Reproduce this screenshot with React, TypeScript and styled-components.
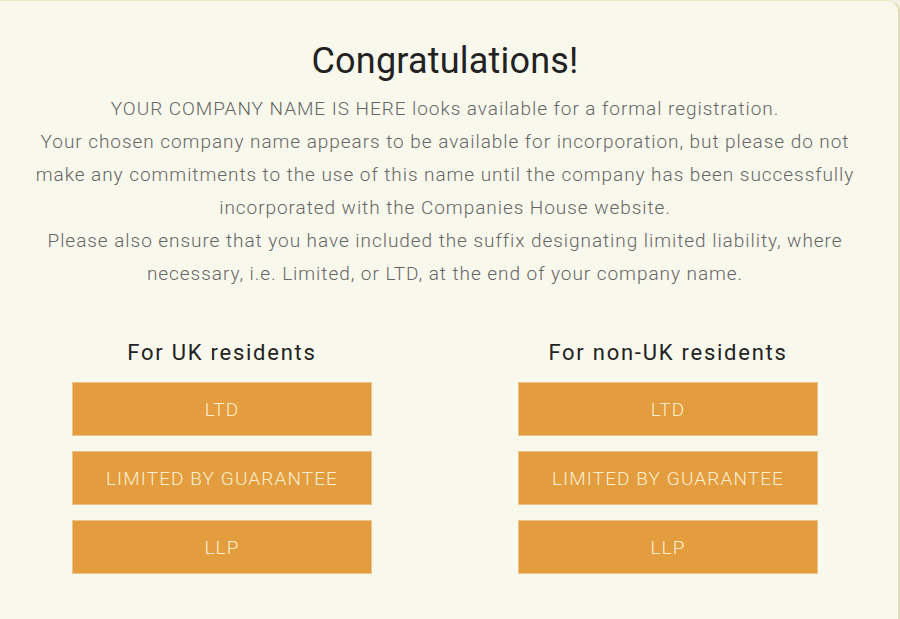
import styled, { createGlobalStyle } from "styled-components";

const GlobalStyle = createGlobalStyle`
  html, body {
    margin: 0;
    padding: 0;
    background: #f3f1e4;
  }
  body {
    font-family: "Roboto", "DejaVu Sans", sans-serif;
  }
`;

const groups = [
  { title: "For UK residents", options: ["LTD", "LIMITED BY GUARANTEE", "LLP"] },
  { title: "For non-UK residents", options: ["LTD", "LIMITED BY GUARANTEE", "LLP"] },
];

export default function App() {
  return (
    <>
      <GlobalStyle />
      <Panel>
        <Title>Congratulations!</Title>
        <Message>
          <p>YOUR COMPANY NAME IS HERE looks available for a formal registration.</p>
          <p>
            Your chosen company name appears to be available for incorporation, but please do not
            <br />
            make any commitments to the use of this name until the company has been successfully
            <br />
            incorporated with the Companies House website.
          </p>
          <p>
            Please also ensure that you have included the suffix designating limited liability, where
            <br />
            necessary, i.e. Limited, or LTD, at the end of your company name.
          </p>
        </Message>
        <Columns>
          {groups.map((group) => (
            <Column key={group.title}>
              <ColumnTitle>{group.title}</ColumnTitle>
              {group.options.map((option) => (
                <OptionButton key={option}>{option}</OptionButton>
              ))}
            </Column>
          ))}
        </Columns>
      </Panel>
    </>
  );
}

const Panel = styled.div`
  box-sizing: border-box;
  width: 900px;
  height: 619px;
  background: #f9f8ec;
  border-top: 1px solid #ebe7c9;
  border-right: 2px solid #e0dbb4;
  border-top-right-radius: 12px;
  padding: 38px 8px 0 0;
  display: flex;
  flex-direction: column;
  align-items: center;
`;

const Title = styled.h1`
  margin: 0;
  font-size: 36px;
  font-weight: 400;
  color: #222;
  line-height: 44px;
  letter-spacing: 0.2px;
`;

const Message = styled.div`
  margin-top: 9px;
  width: 880px;
  text-align: center;
  font-size: 19px;
  line-height: 33px;
  color: #666;
  font-weight: 300;
  letter-spacing: 0.95px;
  white-space: nowrap;

  p {
    margin: 0;
  }
`;

const Columns = styled.div`
  display: flex;
  gap: 146px;
  margin-top: 49px;
`;

const Column = styled.div`
  width: 300px;
  display: flex;
  flex-direction: column;
  align-items: stretch;
  gap: 15px;
`;

const ColumnTitle = styled.h2`
  margin: 0;
  text-align: center;
  font-size: 22px;
  font-weight: 400;
  color: #222;
  line-height: 28px;
  letter-spacing: 1.75px;
`;

const OptionButton = styled.button`
  box-sizing: border-box;
  height: 54px;
  border: 1px solid #ecc389;
  background: #e39c3e;
  color: #fbefcf;
  font-family: inherit;
  font-size: 19px;
  font-weight: 300;
  letter-spacing: 1.1px;
  cursor: pointer;
`;
